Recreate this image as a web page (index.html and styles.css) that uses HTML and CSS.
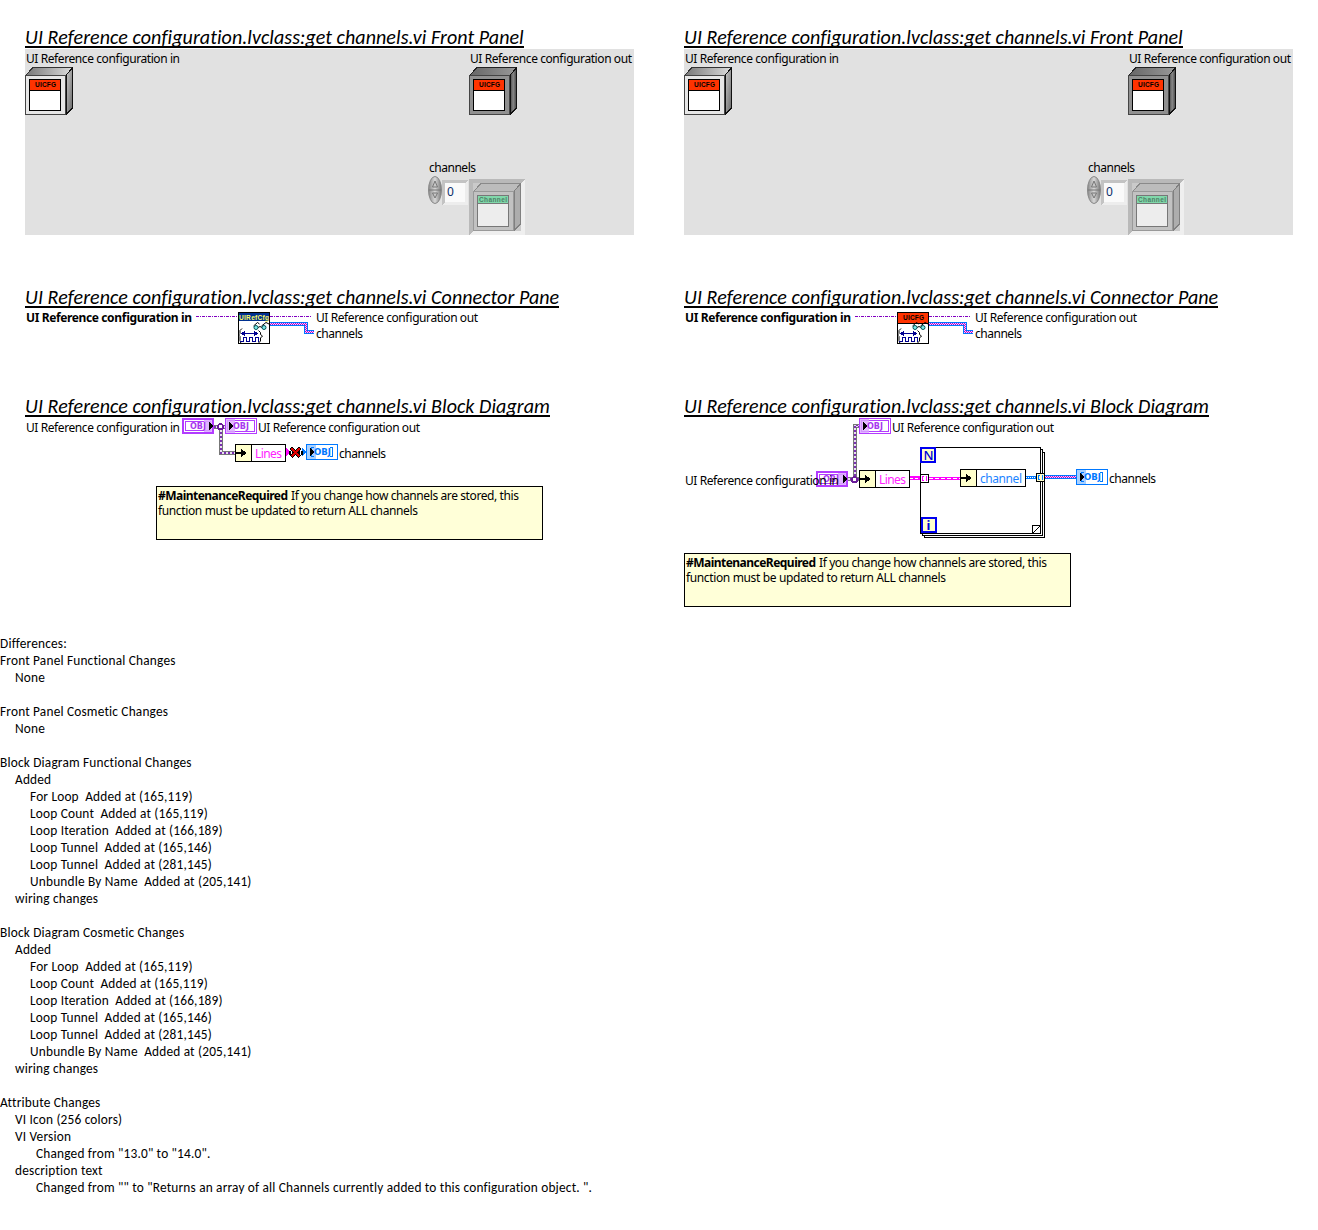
FILE: index.html
```html
<!DOCTYPE html>
<html lang="en">
<head>
<meta charset="utf-8">
<title>get channels.vi differences</title>
<link rel="stylesheet" href="styles.css">
</head>
<body>
<svg class="defs" width="0" height="0" aria-hidden="true">
  <defs>
    <linearGradient id="topLight"><stop offset="0" stop-color="#777"/><stop offset="1" stop-color="#ddd"/></linearGradient>
    <linearGradient id="sideLight" x2="1" y2="1"><stop offset="0" stop-color="#ccc"/><stop offset="1" stop-color="#666"/></linearGradient>
    <linearGradient id="topDark"><stop offset="0" stop-color="#666"/><stop offset="1" stop-color="#999"/></linearGradient>
    <linearGradient id="sideDark"><stop offset="0" stop-color="#444"/><stop offset=".5" stop-color="#888"/><stop offset="1" stop-color="#444"/></linearGradient>
    <linearGradient id="knob"><stop offset="0" stop-color="#888"/><stop offset=".5" stop-color="#d8d8d8"/><stop offset="1" stop-color="#777"/></linearGradient>
    <pattern id="checker" width="2" height="2" patternUnits="userSpaceOnUse"><rect width="2" height="2" fill="#fbd0ff"/><path d="M0 0h1v1H0zM1 1h1v1H1z" fill="#b000c8"/></pattern>
    <pattern id="objWire" width="4" height="4" patternUnits="userSpaceOnUse"><rect width="4" height="4" fill="#e8e0ee"/><path d="M0 0h2v2H0zM2 2h2v2H2z" fill="#7a30b0"/></pattern>
    <symbol id="cubeLight" viewBox="0 0 48 48">
      <path d="M.5 8.5L8 .5H47.5L41 8.5z" fill="url(#topLight)" stroke="#333"/>
      <path d="M41 8.5L47.5 .5V41L41 47.5z" fill="url(#sideLight)" stroke="#111"/>
      <rect x=".5" y="8.5" width="40" height="39" fill="#e6e6e6" stroke="#444"/>
      <rect x="4.500" y="12.500" width="31" height="31" fill="#fff" stroke="#000"/>
      <path d="M5 13h30v10H5z" fill="#ff3300"/><path d="M5 23h30v1H5z"/>
    </symbol>
    <symbol id="cubeDark" viewBox="0 0 48 48">
      <path d="M.5 8.500L8 .5H47.500L41 8.500z" fill="url(#topDark)" stroke="#222"/>
      <path d="M41 8.500L47.500 .5V41L41 47.500z" fill="url(#sideDark)" stroke="#111"/>
      <rect x=".5" y="8.500" width="40" height="39" fill="#909090" stroke="#444"/>
      <rect x="4.500" y="12.500" width="31" height="31" fill="#fff" stroke="#000"/>
      <path d="M5 13h30v10H5z" fill="#ff3300"/><path d="M5 23h30v1H5z"/>
    </symbol>
    <symbol id="channelArray" viewBox="0 0 97 59">
      <path d="M14 4h26v25H14z" fill="#ededed"/><path d="M14 4h26l-3 3H17v19l-3 3z" fill="#c3c3c3"/><path d="M17 7h20v19H17z" fill="#fafafa"/>
      <g shape-rendering="geometricPrecision"><ellipse cx="7" cy="14" rx="6.500" ry="13.500" fill="url(#knob)" stroke="#888"/>
      <path d="M1 14h12" stroke="#777"/><path d="M4.500 11L7 5l2.500 6z M4.500 17L7 22l2.500-5z" fill="#c8c8c8" stroke="#777"/></g>
      <path d="M41 3h56v56H41z" fill="#efefef"/><path d="M41 3h56l-4 4H45v48l-4 4z" fill="#b9b9b9"/><path d="M45 7h48v48H45z" fill="#cacaca"/>
      <path d="M45.500 15.500L53 7.500H92.500L86 15.500z" fill="#bcbcbc" stroke="#8a8a8a"/>
      <path d="M86 15.500L92.500 7.500V48L86 54.500z" fill="#adadad" stroke="#808080"/>
      <path d="M45.500 15.500h40v39h-40z" fill="#c2c2c2" stroke="#999"/>
      <path d="M49.500 19.500h31v31h-31z" fill="#ededed" stroke="#777"/>
      <path d="M50 20h30v7H50z" fill="#80d8aa"/><path d="M50 27h30v1H50z" fill="#777"/>
    </symbol>
    <symbol id="viGlyph" viewBox="0 0 32 32">
      <g shape-rendering="geometricPrecision">
      <g fill="none" stroke="#000"><path d="M15.500 14l4-3.500 2 1.500M23.500 14l4.500-3.500 3 1.500M20 15.500q2-2 4 0"/><path d="M4 16.500l-2 2v3l-1.500 1.500 1.500 1.500v4l1 3M20.500 18.500l2 2v2l2 1.500-2 2v3l-2 2"/></g>
      <circle cx="18" cy="15.500" r="2" fill="#7fe8e8" stroke="#055"/><circle cx="26" cy="15.500" r="2" fill="#7fe8e8" stroke="#055"/>
      </g>
      <path d="M4 21.500h15" fill="none" stroke="#000090"/><path d="M3 21.500l4-3v6zM20 21.500l-4-3v6z" fill="#000090"/>
      <path d="M2 29.500h3v-4h3v4h3v-4h3v4h3v-4h3v4h1" fill="none" stroke="#000090"/>
    </symbol>
    <symbol id="termControl" viewBox="0 0 32 16">
      <path d="M0 0h32v16H0z" fill="#b33cff"/><path d="M2 2h28v12H2z" fill="#fff"/><path d="M3.500 3.500h25v9h-25z" fill="#fff" stroke="#b33cff"/>
      <path d="M22 2h8v12h-8z" fill="#dba8ff" opacity=".85"/><path d="M27 4l4 4-4 4z"/>
    </symbol>
    <symbol id="termIndicator" viewBox="0 0 32 16">
      <path d="M.5 .5h31v15H.5z" fill="#fff" stroke="#b33cff"/><path d="M2.500 2.500h27v11h-27z" fill="#fff" stroke="#b33cff"/>
      <path d="M1 1h9v14H1z" fill="#dba8ff" opacity=".8"/><path d="M4 4l4 4-4 4z"/>
    </symbol>
    <symbol id="termArray" viewBox="0 0 32 16">
      <path d="M.5 .5h31v15H.5z" fill="#fff" stroke="#0078ff"/><path d="M1 1h9v14H1z" fill="#a8d0ff"/>
      <path d="M8 3.500H5.500v9H8M24 3.500h2.500v9H24" fill="none" stroke="#0078ff"/><path d="M4 4l4 4-4 4z"/>
    </symbol>
    <symbol id="rightArrow" viewBox="0 0 12 8"><path d="M0 3h6V0l6 4-6 4V5H0z"/></symbol>
  </defs>
</svg>

<main class="comparison">
  <div class="version">
    <section class="part part-panel">
      <h2 class="title title-panel">UI Reference configuration.lvclass:get channels.vi Front Panel</h2>
      <svg class="panel" viewBox="25 49 609 186" width="609" height="186">
        <text class="label" x="26" y="61" textLength="154">UI Reference configuration in</text>
        <use href="#cubeLight" x="25" y="67" width="48" height="48"/><text class="tiny" x="35" y="87" textLength="21">UICFG</text>
        <text class="label" x="470" y="61" textLength="162">UI Reference configuration out</text>
        <use href="#cubeDark" x="469" y="67" width="48" height="48"/><text class="tiny" x="479" y="87" textLength="21">UICFG</text>
        <text class="label" x="429" y="170" textLength="47">channels</text>
        <use href="#channelArray" x="428" y="176" width="97" height="59"/>
        <text class="index" x="447" y="196">0</text><text class="tiny muted" x="479" y="202" textLength="28">Channel</text>
      </svg>
    </section>
    <section class="part part-connector">
      <h2 class="title title-connector">UI Reference configuration.lvclass:get channels.vi Connector Pane</h2>
      <svg class="canvas" viewBox="25 308 609 87" width="609" height="87">
        <text class="label bold" x="26" y="320" textLength="166">UI Reference configuration in</text>
        <path class="dots" d="M196 316.500h42M270 316.500h42"/>
        <path class="blue" d="M270 322h38v8h6v4h-10v-8h-34z"/><path fill="url(#checker)" d="M270 323h37v8h7v2h-9v-8h-35z"/>
        <rect class="box" x="238.500" y="312.500" width="31" height="31"/><path fill="#003090" d="M239 313h30v8h-30z"/>
        <text class="tiny yellow" x="239" y="319.500" textLength="30">UIRefCfg</text>
        <use href="#viGlyph" x="238" y="312" width="32" height="32"/>
        <text class="label" x="316" y="320" textLength="162">UI Reference configuration out</text>
        <text class="label" x="316" y="336" textLength="47">channels</text>
      </svg>
    </section>
    <section class="part">
      <h2 class="title title-diagram">UI Reference configuration.lvclass:get channels.vi Block Diagram</h2>
      <svg class="canvas" viewBox="25 417 609 194" width="609" height="194">
        <text class="label" x="26" y="430" textLength="154">UI Reference configuration in</text>
        <path class="wire-edge" d="M214 426.500h12M220.500 426v27h15"/><path class="wire" d="M214 426.500h12M220.500 426v27h15"/>
        <circle class="joint" cx="220.500" cy="426.500" r="2.500"/>
        <use href="#termControl" x="182" y="418" width="32" height="16"/><text class="obj" x="190" y="429" textLength="16" lengthAdjust="spacingAndGlyphs">OBJ</text>
        <use href="#termIndicator" x="225" y="418" width="32" height="16"/><text class="obj" x="233" y="429" textLength="16" lengthAdjust="spacingAndGlyphs">OBJ</text>
        <text class="label" x="258" y="430" textLength="162">UI Reference configuration out</text>
        <rect class="box" x="235.500" y="444.500" width="50" height="17"/><rect class="box cream" x="235.500" y="444.500" width="16" height="17"/>
        <use href="#rightArrow" x="235" y="449" width="12" height="8"/><text class="label pink" x="255" y="456" textLength="27">Lines</text>
        <path fill="#f0f" d="M286 447l4 5-4 5z"/><path fill="#0078ff" d="M302 447l4 5-4 5z"/>
        <path stroke="#000" stroke-width="4" stroke-dasharray="2 1" d="M289 452.500h14"/>
        <path stroke="#000" stroke-width="4" d="M291 448l9 9M300 448l-9 9"/><path stroke="#e00000" stroke-width="2.500" d="M291.500 448.500l8 8M299.500 448.500l-8 8"/>
        <use href="#termArray" x="306" y="444" width="32" height="16"/><text class="obj sky" x="314" y="455" textLength="17" lengthAdjust="spacingAndGlyphs">OBJ</text>
        <text class="label" x="339" y="456" textLength="47">channels</text>
        <rect class="box note" x="156.500" y="486.500" width="386" height="53"/>
        <text class="label bold" x="158" y="498" textLength="130">#MaintenanceRequired</text><text class="label" x="291" y="498" textLength="228">If you change how channels are stored, this</text>
        <text class="label" x="158" y="513" textLength="260">function must be updated to return ALL channels</text>
      </svg>
    </section>
  </div>

  <div class="version">
    <section class="part part-panel">
      <h2 class="title title-panel">UI Reference configuration.lvclass:get channels.vi Front Panel</h2>
      <svg class="panel" viewBox="25 49 609 186" width="609" height="186">
        <text class="label" x="26" y="61" textLength="154">UI Reference configuration in</text>
        <use href="#cubeLight" x="25" y="67" width="48" height="48"/><text class="tiny" x="35" y="87" textLength="21">UICFG</text>
        <text class="label" x="470" y="61" textLength="162">UI Reference configuration out</text>
        <use href="#cubeDark" x="469" y="67" width="48" height="48"/><text class="tiny" x="479" y="87" textLength="21">UICFG</text>
        <text class="label" x="429" y="170" textLength="47">channels</text>
        <use href="#channelArray" x="428" y="176" width="97" height="59"/>
        <text class="index" x="447" y="196">0</text><text class="tiny muted" x="479" y="202" textLength="28">Channel</text>
      </svg>
    </section>
    <section class="part part-connector">
      <h2 class="title title-connector">UI Reference configuration.lvclass:get channels.vi Connector Pane</h2>
      <svg class="canvas" viewBox="25 308 609 87" width="609" height="87">
        <text class="label bold" x="26" y="320" textLength="166">UI Reference configuration in</text>
        <path class="dots" d="M196 316.500h42M270 316.500h42"/>
        <path class="blue" d="M270 322h38v8h6v4h-10v-8h-34z"/><path fill="url(#checker)" d="M270 323h37v8h7v2h-9v-8h-35z"/>
        <rect class="box" x="238.500" y="312.500" width="31" height="31"/><path fill="#ff3300" d="M239 313h30v10h-30z"/><path d="M239 323h30v1h-30z"/>
        <text class="tiny" x="244" y="320" textLength="21">UICFG</text>
        <use href="#viGlyph" x="238" y="312" width="32" height="32"/>
        <text class="label" x="316" y="320" textLength="162">UI Reference configuration out</text>
        <text class="label" x="316" y="336" textLength="47">channels</text>
      </svg>
    </section>
    <section class="part">
      <h2 class="title title-diagram">UI Reference configuration.lvclass:get channels.vi Block Diagram</h2>
      <svg class="canvas" viewBox="684 417 609 194" width="609" height="194">
        <use href="#termControl" x="816" y="471" width="32" height="16"/><text class="obj" x="823" y="482" textLength="16" lengthAdjust="spacingAndGlyphs">OBJ</text>
        <text class="label" x="685" y="483" textLength="154">UI Reference configuration in</text>
        <path class="wire-edge" d="M848 479h11M854.500 480v-54h5"/><path class="wire" d="M848 479h11M854.500 480v-54h5"/>
        <circle class="joint" cx="854.500" cy="479.500" r="2.500"/>
        <use href="#termIndicator" x="859" y="418" width="32" height="16"/><text class="obj" x="867" y="429" textLength="16" lengthAdjust="spacingAndGlyphs">OBJ</text>
        <text class="label" x="892" y="430" textLength="162">UI Reference configuration out</text>
        <rect class="box" x="859.500" y="470.500" width="50" height="17"/><rect class="box cream" x="859.500" y="470.500" width="16" height="17"/>
        <use href="#rightArrow" x="859" y="475" width="12" height="8"/><text class="label pink" x="879" y="482" textLength="27">Lines</text>
        <rect class="box" x="924.500" y="452.500" width="120" height="85"/><rect class="box" x="922.500" y="449.500" width="120" height="86"/><rect class="box" x="920.500" y="447.500" width="120" height="86"/>
        <path fill="none" stroke="#000" d="M1032.500 533v-7.500h8M1032.500 533.500l8-8"/>
        <rect class="counter" x="921" y="448" width="14" height="14"/><text class="counter-text" x="923.500" y="459.500">N</text>
        <rect class="counter" x="922" y="518" width="14" height="14"/><text class="counter-text counter-i" x="926.500" y="530">i</text>
        <path stroke="#f0f" stroke-width="4" d="M910 478h10"/><path stroke="#fff" stroke-dasharray="3 2" d="M910 478.500h10"/>
        <path stroke="#f0f" stroke-width="3" d="M929 478.500h31"/><path stroke="#fff" stroke-dasharray="4 2" d="M929 478.500h31"/>
        <rect class="box" x="920.500" y="474.500" width="8" height="8"/><path fill="none" stroke="#f0f" d="M924 476.500h-1.500v4h1.500M925.500 476.500h1v4h-1"/>
        <rect class="box" x="960.500" y="469.500" width="65" height="17"/><rect class="box cream" x="960.500" y="469.500" width="16" height="17"/>
        <use href="#rightArrow" x="960" y="474" width="12" height="8"/><text class="label sky" x="980" y="481" textLength="42">channel</text>
        <path stroke="#0078ff" stroke-width="3" d="M1026 477.500h10"/><path stroke="#fff" stroke-dasharray="1 1" d="M1026 477.500h10"/>
        <path stroke="#0078ff" stroke-width="4" d="M1045 477h31"/><path fill="url(#checker)" d="M1045 476h31v2h-31z"/>
        <rect class="box cream" x="1036.500" y="473.500" width="8" height="8"/><path fill="none" stroke="#0078ff" d="M1040 475.500h-1.500v4h1.500M1041.500 475.500h1v4h-1"/>
        <use href="#termArray" x="1076" y="469" width="32" height="16"/><text class="obj sky" x="1084" y="480" textLength="17" lengthAdjust="spacingAndGlyphs">OBJ</text>
        <text class="label" x="1109" y="481" textLength="47">channels</text>
        <rect class="box note" x="684.500" y="553.500" width="386" height="53"/>
        <text class="label bold" x="686" y="565" textLength="130">#MaintenanceRequired</text><text class="label" x="819" y="565" textLength="228">If you change how channels are stored, this</text>
        <text class="label" x="686" y="580" textLength="260">function must be updated to return ALL channels</text>
      </svg>
    </section>
  </div>
</main>

<section class="differences">
  <p>Differences:</p>
  <div class="group"><p>Front Panel Functional Changes</p><p class="in1">None</p></div>
  <div class="group"><p>Front Panel Cosmetic Changes</p><p class="in1">None</p></div>
  <div class="group">
    <p>Block Diagram Functional Changes</p><p class="in1">Added</p>
    <p class="in2">For Loop&nbsp; Added at (165,119)</p><p class="in2">Loop Count&nbsp; Added at (165,119)</p><p class="in2">Loop Iteration&nbsp; Added at (166,189)</p>
    <p class="in2">Loop Tunnel&nbsp; Added at (165,146)</p><p class="in2">Loop Tunnel&nbsp; Added at (281,145)</p><p class="in2">Unbundle By Name&nbsp; Added at (205,141)</p>
    <p class="in1">wiring changes</p>
  </div>
  <div class="group">
    <p>Block Diagram Cosmetic Changes</p><p class="in1">Added</p>
    <p class="in2">For Loop&nbsp; Added at (165,119)</p><p class="in2">Loop Count&nbsp; Added at (165,119)</p><p class="in2">Loop Iteration&nbsp; Added at (166,189)</p>
    <p class="in2">Loop Tunnel&nbsp; Added at (165,146)</p><p class="in2">Loop Tunnel&nbsp; Added at (281,145)</p><p class="in2">Unbundle By Name&nbsp; Added at (205,141)</p>
    <p class="in1">wiring changes</p>
  </div>
  <div class="group">
    <p>Attribute Changes</p><p class="in1">VI Icon (256 colors)</p><p class="in1">VI Version</p><p class="in3">Changed from "13.0" to "14.0".</p>
    <p class="in1">description text</p><p class="in3 long">Changed from "" to "Returns an array of all Channels currently added to this configuration object. ".</p>
  </div>
</section>
</body>
</html>
```
FILE: styles.css
```css
body { margin: 0; background: #fff; color: #000; }
.defs { position: absolute; }
.comparison { display: grid; grid-template-columns: 659px 659px; padding-top: 26px; }
.version { padding-left: 25px; }
.part { display: flex; flex-direction: column; align-items: flex-start; }
.part-panel { padding-bottom: 51px; }
.title {
  box-sizing: border-box; height: 22px; margin: 0; overflow: hidden; white-space: nowrap;
  border-bottom: 2px solid #000;
  font: italic 20px/22px Calibri, Carlito, Lato, sans-serif;
  letter-spacing: .06px; font-variant-ligatures: none;
}
.panel, .canvas { display: block; flex: none; font: 12px "Noto Sans", sans-serif; shape-rendering: crispEdges; }
.panel { background: #e1e1e1; margin-top: 1px; }
.label { transform: translateY(2px); }
.bold { font-weight: 700; }
.tiny { font: 700 6.5px "Liberation Sans", sans-serif; }
.muted { fill: #4f7f67; }
.yellow { fill: #ffff60; }
.index { fill: #10306a; }
.dots { stroke: #8000c0; stroke-dasharray: 3 1 1 1; }
.blue { fill: #0078ff; }
.sky { fill: #1c84ff; }
.pink { fill: #f2f; }
.box { fill: #fff; stroke: #000; }
.cream { fill: #ffffcc; }
.note { fill: #ffffd8; }
.obj { font: 700 8px "DejaVu Sans", sans-serif; fill: #a838f0; }
.obj.sky { fill: #0078ff; }
.wire-edge { fill: none; stroke: #777; stroke-width: 4; }
.wire { fill: none; stroke: url(#objWire); stroke-width: 2; }
.joint { fill: #fff; stroke: #6a1b9a; stroke-width: 2; }
.counter { fill: #ffffcc; stroke: #0000f0; stroke-width: 2; }
.counter-text { font: 500 13px "Noto Sans", sans-serif; fill: #0000d8; }
.counter-i { font-weight: 700; }
.differences { margin-top: 24px; font: 13.33px/17px Calibri, Carlito, Lato, sans-serif; letter-spacing: .19px; font-variant-ligatures: none; white-space: nowrap; }
.differences p { margin: 0; }
.group + .group { margin-top: 17px; }
.in1 { padding-left: 15px; }
.in2 { padding-left: 30px; }
.in3 { padding-left: 36px; }
```
